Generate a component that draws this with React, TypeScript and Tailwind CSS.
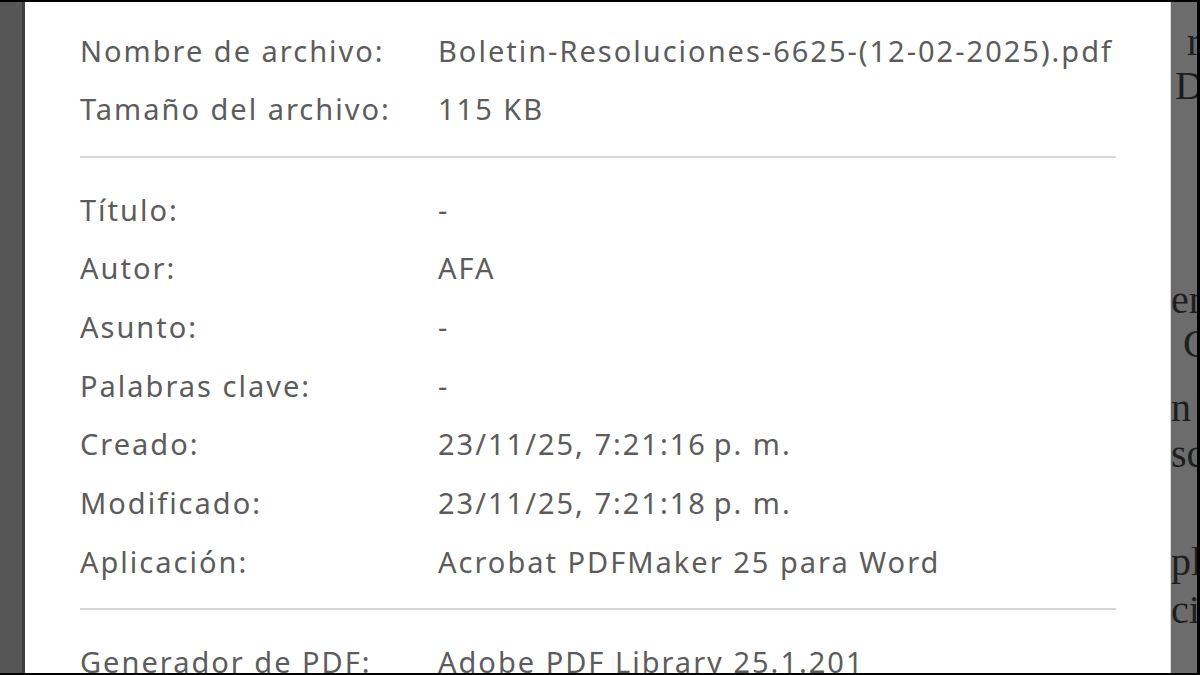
import React from "react";

const rowsTop = [
  { label: "Nombre de archivo:", value: "Boletin-Resoluciones-6625-(12-02-2025).pdf" },
  { label: "Tamaño del archivo:", value: "115 KB" },
];

const rowsMid = [
  { label: "Título:", value: "-" },
  { label: "Autor:", value: "AFA" },
  { label: "Asunto:", value: "-" },
  { label: "Palabras clave:", value: "-" },
  { label: "Creado:", value: "23/11/25, 7:21:16\u2009p. m." },
  { label: "Modificado:", value: "23/11/25, 7:21:18\u2009p. m." },
  { label: "Aplicación:", value: "Acrobat PDFMaker 25 para Word" },
];

const rowsBottom = [{ label: "Generador de PDF:", value: "Adobe PDF Library 25.1.201" }];

function Row({ label, value, tall }: { label: string; value: string; tall?: boolean }) {
  return (
    <div className={`flex items-center ${tall ? "h-[58.67px]" : "h-[58px]"}`}>
      <div className="w-[358px] shrink-0 whitespace-nowrap">{label}</div>
      <div className="whitespace-nowrap">{value}</div>
    </div>
  );
}

// pedazos del documento que se ve detras del dialogo
const docLines = [
  { text: "r", cls: "mt-[18px] pl-[16px] h-[44px]" },
  { text: "D", cls: "pl-[4px] h-[44px]" },
  { text: "en", cls: "mt-[170px] pl-[0px] h-[44px]" },
  { text: "C", cls: "pl-[12px] h-[46px]" },
  { text: "n", cls: "mt-[18px] pl-[0px] h-[46px]" },
  { text: "sc", cls: "pl-[0px] h-[46px]" },
  { text: "pl", cls: "mt-[62px] pl-[0px] h-[48px]" },
  { text: "cia", cls: "pl-[0px] h-[48px]" },
];

export default function App() {
  return (
    <div className="w-[1200px] h-[675px] bg-black pt-[2px] pb-[2px] overflow-hidden">
      <div className="flex h-full">
        {/* lado izquierdo */}
        <div className="w-[22px] bg-[#565656]" />
        <div className="w-[3px] bg-[#3f3f3f]" />

        {/* dialogo de propiedades */}
        <div
          className="flex-1 bg-white pl-[55px] pr-[54px] pt-[20px] text-[29px] tracking-[2px] text-[#5c5c5c] overflow-hidden"
          style={{ fontFamily: '"Noto Sans", "Open Sans", sans-serif' }}
        >
          {rowsTop.map((r) => (
            <Row key={r.label} {...r} />
          ))}
          <div className="h-[2px] bg-[#d6d6d6] mt-[18px] mb-[22px]" />
          {rowsMid.map((r) => (
            <Row key={r.label} {...r} tall />
          ))}
          <div className="h-[2px] bg-[#d6d6d6] mt-[17px] mb-[23px]" />
          {rowsBottom.map((r) => (
            <Row key={r.label} {...r} />
          ))}
        </div>

        {/* documento de fondo */}
        <div className="w-[1px] bg-[#d9d9d9]" />
        <div
          className="w-[26px] bg-[#6c6c6c] overflow-hidden text-[40px] leading-[44px] text-[#1e1e1e]"
          style={{ fontFamily: '"Liberation Serif", serif' }}
        >
          {docLines.map((l, i) => (
            <div key={i} className={`whitespace-nowrap ${l.cls}`}>
              {l.text}
            </div>
          ))}
        </div>
        <div className="w-[3px] bg-black" />
      </div>
    </div>
  );
}
